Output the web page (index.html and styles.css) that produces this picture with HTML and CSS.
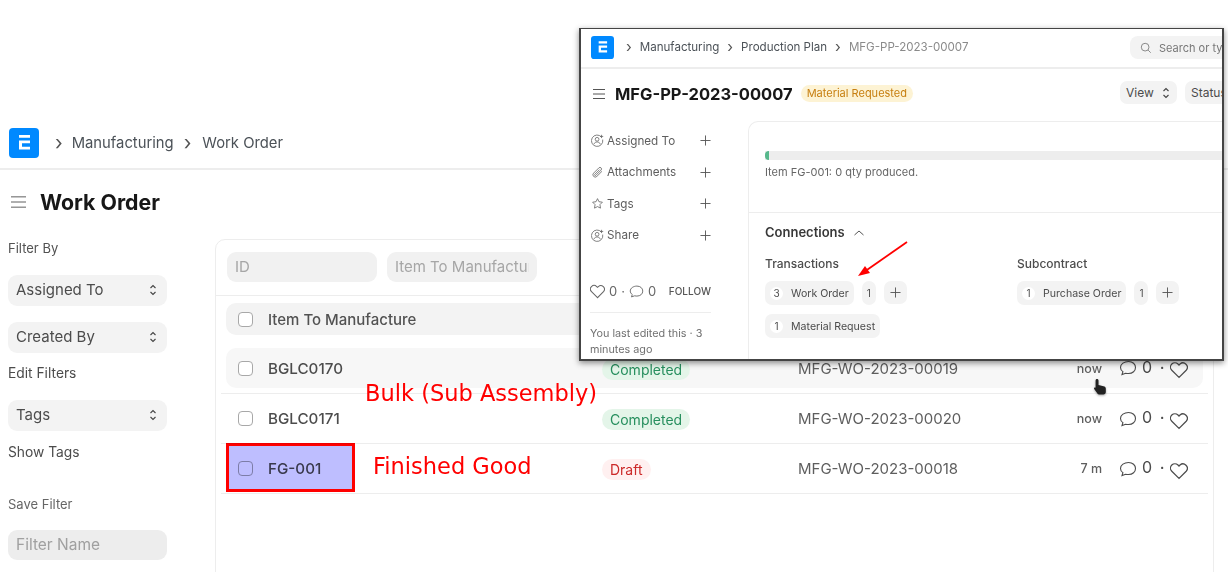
FILE: index.html
```html
<!DOCTYPE html>
<html lang="en">
<head>
<meta charset="utf-8">
<title>Work Order</title>
<link rel="stylesheet" href="styles.css">
</head>
<body>
<svg class="defs" width="0" height="0" aria-hidden="true">
  <defs>
    <symbol id="logo" viewBox="0 0 30 30">
      <rect width="30" height="30" rx="4" fill="#0089ff"/>
      <path d="M10 7h11v2.800H10zM10 12.500h11v2.800h-8v3.400h8v2.800H10z" fill="#fff"/>
    </symbol>
    <symbol id="updown" viewBox="0 0 8 14">
      <path d="M1.500 5 4 2.500 6.500 5M1.500 9 4 11.500 6.500 9" fill="none" stroke="currentColor" stroke-width="1.100"/>
    </symbol>
    <symbol id="heart" viewBox="1 1 16 16">
      <path d="M9 15.600 2.600 9.200a3.900 3.900 0 0 1 0-5.500 3.900 3.900 0 0 1 5.500 0l.9.900.9-.9a3.900 3.900 0 0 1 5.500 5.500z" fill="none" stroke="currentColor" stroke-width="1.100"/>
    </symbol>
    <symbol id="comment" viewBox="0 0 18 18">
      <path d="M9.500 2.500C5.300 2.500 1.500 5 1.500 8.400c0 1.800 1 3.200 2.400 4.200L3 15.500l3.600-1.300c.9.200 1.900.3 2.900.3 4.200 0 7-2.600 7-6S13.700 2.500 9.500 2.500z" fill="none" stroke="currentColor" stroke-width="1.100"/>
    </symbol>
    <symbol id="user" viewBox="0 0 16 16">
      <path d="M13 3.900a7 7 0 1 0 1.400 3" fill="none" stroke="currentColor"/>
      <circle cx="7.500" cy="6.500" r="2.300" fill="none" stroke="currentColor"/>
      <path d="M3.500 12.500c.8-1.800 2.200-2.700 4-2.700s3.200.9 4 2.700M13 1v4M11 3h4" fill="none" stroke="currentColor"/>
    </symbol>
    <symbol id="plus" viewBox="0 0 12 12">
      <path d="M6 .5v11M.5 6h11" fill="none" stroke="currentColor"/>
    </symbol>
  </defs>
</svg>

<div class="page">
  <header class="topbar">
    <svg class="logo"><use href="#logo"/></svg>
    <nav class="crumbs"><span class="sep">›</span><span>Manufacturing</span><span class="sep">›</span><span>Work Order</span></nav>
  </header>
  <div class="titlebar">
    <svg class="menu" viewBox="0 0 16 14"><path d="M0 1.500h16M0 7h16M0 12.500h16" stroke="#555" fill="none"/></svg>
    <h1>Work Order</h1>
  </div>
  <div class="body">
    <aside class="filters">
      <div class="side-label first">Filter By</div>
      <div class="select">Assigned To<svg class="updown"><use href="#updown"/></svg></div>
      <div class="select">Created By<svg class="updown"><use href="#updown"/></svg></div>
      <div class="side-link edit">Edit Filters</div>
      <div class="select">Tags<svg class="updown"><use href="#updown"/></svg></div>
      <div class="side-link show">Show Tags</div>
      <div class="side-label save">Save Filter</div>
      <div class="input-fill">Filter Name</div>
    </aside>
    <main class="card">
      <div class="inputs">
        <div class="input"><span class="input-text">ID</span></div>
        <div class="input"><span class="input-text">Item To Manufacture</span></div>
      </div>
      <div class="rows">
        <div class="row head"><span class="check"></span><span class="name">Item To Manufacture</span></div>
        <div class="row hover">
          <span class="check"></span><span class="name">BGLC0170</span>
          <span class="status"><span class="pill green">Completed</span></span>
          <span class="docid">MFG-WO-2023-00019</span>
          <span class="time">now</span>
          <span class="meta"><svg class="ic"><use href="#comment"/></svg><b>0</b><i>·</i><svg class="ic"><use href="#heart"/></svg></span>
        </div>
        <div class="row">
          <span class="check"></span><span class="name">BGLC0171</span>
          <span class="status"><span class="pill green">Completed</span></span>
          <span class="docid">MFG-WO-2023-00020</span>
          <span class="time">now</span>
          <span class="meta"><svg class="ic"><use href="#comment"/></svg><b>0</b><i>·</i><svg class="ic"><use href="#heart"/></svg></span>
        </div>
        <div class="row">
          <span class="check"></span><span class="name">FG-001</span>
          <span class="status"><span class="pill red">Draft</span></span>
          <span class="docid">MFG-WO-2023-00018</span>
          <span class="time">7 m</span>
          <span class="meta"><svg class="ic"><use href="#comment"/></svg><b>0</b><i>·</i><svg class="ic"><use href="#heart"/></svg></span>
        </div>
      </div>
    </main>
  </div>
</div>

<div class="mark-box"></div>
<div class="note note-bulk">Bulk (Sub Assembly)</div>
<div class="note note-good">Finished Good</div>

<section class="window">
  <header class="w-top">
    <svg class="w-logo"><use href="#logo"/></svg>
    <nav class="w-crumbs"><span class="sep">›</span><span>Manufacturing</span><span class="sep">›</span><span>Production Plan</span><span class="sep">›</span><span class="muted">MFG-PP-2023-00007</span></nav>
    <div class="w-search"><svg viewBox="0 0 14 14"><circle cx="6" cy="6" r="4.500" fill="none" stroke="#777"/><path d="m9.500 9.500 3 3" stroke="#777"/></svg><span>Search or type a command</span></div>
  </header>
  <div class="w-title">
    <svg class="w-menu" viewBox="0 0 12 12"><path d="M0 1.500h12M0 6h12M0 10.500h12" stroke="#555" fill="none"/></svg>
    <h2>MFG-PP-2023-00007</h2>
    <span class="w-badge">Material Requested</span>
    <div class="w-actions">
      <span class="w-btn view">View<svg class="updown small"><use href="#updown"/></svg></span>
      <span class="w-btn">Status</span>
    </div>
  </div>
  <div class="w-body">
    <aside class="w-side">
      <div class="w-item"><svg class="w-ic"><use href="#user"/></svg><span>Assigned To</span><svg class="w-plus"><use href="#plus"/></svg></div>
      <div class="w-item"><svg class="w-ic" viewBox="0 0 16 16"><path d="M13.500 6.500 7.200 12.800a2.800 2.800 0 0 1-4-4l6.500-6.500a1.900 1.900 0 0 1 2.700 2.700L6 11.500a.9.9 0 0 1-1.300-1.300l5.800-5.800" fill="none" stroke="currentColor"/></svg><span>Attachments</span><svg class="w-plus"><use href="#plus"/></svg></div>
      <div class="w-item"><svg class="w-ic" viewBox="0 0 16 16"><path d="m8 2 1.800 3.800 4.200.6-3 3 .7 4.300L8 11.800l-3.700 1.900.7-4.300-3-3 4.200-.6z" fill="none" stroke="currentColor"/></svg><span>Tags</span><svg class="w-plus"><use href="#plus"/></svg></div>
      <div class="w-item"><svg class="w-ic"><use href="#user"/></svg><span>Share</span><svg class="w-plus"><use href="#plus"/></svg></div>
      <div class="w-stats"><svg class="w-s-ic"><use href="#heart"/></svg><span>0</span><em>·</em><svg class="w-s-ic"><use href="#comment"/></svg><span>0</span><small>FOLLOW</small></div>
      <p class="w-edited">You last edited this · 3 minutes ago</p>
    </aside>
    <div class="w-form">
      <div class="w-progress-wrap">
        <div class="w-progress"><div class="w-progress-fill"></div></div>
        <div class="w-progress-text">Item FG-001: 0 qty produced.</div>
      </div>
      <div class="w-conn">
        <div class="w-conn-head">Connections<svg viewBox="0 0 12 8"><path d="m1.500 6 4.500-4 4.500 4" fill="none" stroke="#555"/></svg></div>
        <div class="w-cols">
          <div class="w-col">
            <div class="w-col-title">Transactions</div>
            <div class="w-line"><span class="chip"><span class="num">3</span>Work Order</span><span class="tiny">1</span><span class="add"><svg><use href="#plus"/></svg></span></div>
            <div class="w-line"><span class="chip"><span class="num">1</span>Material Request</span></div>
          </div>
          <div class="w-col">
            <div class="w-col-title">Subcontract</div>
            <div class="w-line"><span class="chip"><span class="num">1</span>Purchase Order</span><span class="tiny">1</span><span class="add"><svg><use href="#plus"/></svg></span></div>
          </div>
        </div>
      </div>
    </div>
  </div>
</section>

<svg class="arrow" viewBox="0 0 52 36"><path d="M50 1 7 31" stroke="#f00" stroke-width="1.800" fill="none"/><path d="M1 35 13 32 8 25z" fill="#f00"/></svg>
<svg class="cursor" viewBox="0 0 14 18"><path d="M4 1c.9 0 1.500.6 1.500 1.500V7l5 1.200c1.400.3 2.300 1.100 2.300 2.400v3.400c0 1.400-1 2.500-2.400 2.500H6.500c-.9 0-1.600-.3-2.100-1.100L1.200 11c-.6-1 .5-2.100 1.400-1.300V2.500C2.600 1.600 3.100 1 4 1z" fill="#222"/></svg>
</body>
</html>
```
FILE: styles.css
```css
* { box-sizing: border-box; }
html, body { margin: 0; height: 100%; }
body {
  width: 1228px;
  height: 572px;
  overflow: hidden;
  position: relative;
  background: #fff;
  font-family: Inter, "Liberation Sans", sans-serif;
  color: #383838;
}
.defs { position: absolute; }

/* main page */
.page { padding-top: 118px; }
.topbar {
  height: 52px;
  display: flex;
  align-items: center;
  padding-left: 9px;
  border-bottom: 2px solid #ededed;
}
.logo { width: 30px; height: 30px; }
.crumbs { display: flex; align-items: center; font-size: 14.800px; color: #4c5258; margin-left: 16px; }
.crumbs .sep { font-size: 20px; line-height: 20px; margin-right: 9px; color: #555; }
.crumbs span:nth-child(3) { margin-left: 10px; margin-right: 11px; }
.titlebar { display: flex; align-items: center; height: 64px; padding-left: 11px; }
.menu { width: 15px; height: 14px; }
h1 { margin: 0 0 0 14px; font-size: 21.300px; line-height: 28px; font-weight: 700; color: #171717; }
.body { display: flex; align-items: flex-start; padding-left: 8px; }
.filters { width: 159px; flex: none; font-size: 13px; color: #525252; }
.side-label.first { margin-top: 6px; line-height: 16px; }
.select {
  height: 31px;
  margin-top: 19px;
  padding: 0 10px 2px 8px;
  display: flex;
  align-items: center;
  justify-content: space-between;
  background: #f3f3f3;
  border-radius: 9px;
  font-size: 15px;
  color: #4c4c4c;
}
.select + .select { margin-top: 16px; }
.updown { width: 8px; height: 14px; color: #444; }
.updown.small { margin-left: 8px; }
.side-link { font-size: 13.800px; line-height: 16px; color: #4c4c4c; }
.edit { margin-top: 12px; }
.edit + .select { margin-top: 19px; }
.show { margin-top: 13px; }
.save { margin-top: 36px; line-height: 16px; color: #666; }
.input-fill {
  margin-top: 18px;
  height: 30px;
  padding-left: 8px;
  border-radius: 9px;
  background: #ededed;
  font-size: 15.500px;
  line-height: 30px;
  color: #a0a0a0;
}
.card {
  margin: 5px 0 0 48px;
  width: 999px;
  height: 340px;
  border: 1px solid #ededed;
  border-radius: 10px 0 0 0;
}
.inputs { display: flex; gap: 10px; height: 56px; padding: 12px 11px 0; border-bottom: 1px solid #ededed; }
.input {
  width: 150px;
  height: 30px;
  padding: 0 8px;
  background: #f1f1f1;
  border-radius: 9px;
  font-size: 15px;
  line-height: 30px;
  color: #a6a6a6;
}
.input-text { display: block; overflow: hidden; white-space: nowrap; }
.rows { padding: 7px 5px 0; }
.row {
  display: grid;
  grid-template-columns: 30px 334px 196px 1fr 60px 106px;
  align-items: center;
  height: 50px;
  padding-left: 17px;
  border-bottom: 1px solid #ededed;
  font-size: 15.200px;
  color: #4c4c4c;
}
.row.head {
  height: 32px;
  margin: 0 5px 13px;
  padding-left: 12px;
  background: #f3f3f3;
  border-radius: 10px;
  border: 0;
}
.row.head .name { color: #525252; font-size: 15px; white-space: nowrap; }
.row.hover {
  height: 46px;
  padding-bottom: 5px;
  position: relative;
  isolation: isolate;
}
.row.hover::before {
  content: "";
  position: absolute;
  inset: 0 5px 5px 5px;
  z-index: -1;
  background: #f7f7f7;
  border-radius: 10px;
}
.check { width: 15px; height: 15px; border: 1px solid #a8a8a8; border-radius: 4px; background: #fff; }
.name { font-weight: 500; }
.status { padding-top: 2px; }
.pill { display: inline-block; padding: 0 8px; height: 21px; line-height: 21px; font-size: 14px; border-radius: 11px; }
.pill.green { background: #e4f5e9; color: #278f5e; }
.pill.red { background: #fff0f0; color: #cc2929; }
.docid { color: #5e5e5e; font-size: 15px; white-space: nowrap; }
.time { text-align: right; font-size: 12.500px; font-weight: 500; color: #5e5e5e; }
.meta { display: flex; align-items: center; padding-left: 17px; color: #4c4c4c; }
.meta b { font-weight: 400; font-size: 16px; margin: -3px 0 0 5px; }
.meta i { font-style: normal; margin: -3px 6px 0 8px; font-weight: 700; font-size: 13px; }
.ic { width: 18px; height: 18px; }
.ic:last-child { margin-top: 4px; }

/* annotations */
.mark-box {
  position: absolute;
  left: 226px;
  top: 443px;
  width: 129px;
  height: 49px;
  border: 3px solid #f00;
  background: rgba(100, 100, 255, 0.42);
  mix-blend-mode: multiply;
}
.note { position: absolute; color: #f00; font-family: "DejaVu Sans", sans-serif; white-space: nowrap; font-size: 22.500px; line-height: 28px; }
.note-bulk { left: 365px; top: 379px; }
.note-good { left: 373px; top: 452px; }
.arrow { position: absolute; left: 857px; top: 241px; width: 52px; height: 36px; z-index: 3; }
.cursor {
  position: absolute;
  left: 1093px;
  top: 378px;
  width: 14px;
  height: 18px;
  filter: drop-shadow(0 1px 1px rgba(0, 0, 0, 0.35));
}

/* overlaid window */
.window {
  position: absolute;
  left: 579px;
  top: 28px;
  width: 645px;
  height: 333px;
  overflow: hidden;
  background: #fff;
  border: 1px solid #444;
  border-width: 1px 2px 2px 2px;
  box-shadow: 0 2px 6px rgba(0, 0, 0, 0.45);
  z-index: 2;
}
.w-top {
  position: relative;
  height: 40px;
  display: flex;
  align-items: center;
  padding: 0 0 2px 10px;
  border-bottom: 2px solid #ededed;
  white-space: nowrap;
}
.w-logo { width: 23px; height: 23px; flex: none; }
.w-crumbs { display: flex; align-items: center; font-size: 11.550px; color: #4c5258; margin-left: 12px; }
.w-crumbs .sep { font-size: 15px; line-height: 14px; margin: 0 8px; color: #555; }
.w-crumbs .sep:first-child { margin-left: 0; }
.muted { color: #8a8a8a; }
.w-search {
  position: absolute;
  left: 549px;
  top: 7px;
  width: 200px;
  height: 23px;
  display: flex;
  align-items: center;
  gap: 7px;
  padding-left: 10px;
  background: #f3f3f3;
  border-radius: 8px;
  font-size: 11px;
  color: #777;
}
.w-search svg { width: 12px; height: 12px; }
.w-title { position: relative; height: 51px; display: flex; align-items: center; padding: 0 0 2px 12px; white-space: nowrap; }
.w-menu { width: 12px; height: 12px; }
h2 { margin: 0 0 0 10px; font-size: 16.500px; line-height: 24px; font-weight: 700; color: #171717; }
.w-badge {
  margin-left: 8px;
  height: 17px;
  padding: 0 6px;
  background: #fdf3d4;
  color: #c77f10;
  border-radius: 9px;
  font-size: 11px;
  line-height: 17px;
}
.w-actions { position: absolute; left: 539px; top: 12px; display: flex; gap: 8px; }
.w-btn {
  height: 23px;
  padding: 0 6px;
  display: flex;
  align-items: center;
  background: #f3f3f3;
  border-radius: 7px;
  font-size: 12px;
  color: #4c4c4c;
}
.w-btn.view { width: 57px; }
.w-body { display: flex; height: 241px; }
.w-side { width: 167px; flex: none; padding: 5px 0 0 9px; font-size: 11.700px; color: #5e5e5e; }
.w-item { height: 31.500px; padding-left: 1px; display: flex; align-items: center; }
.w-ic { width: 13px; height: 13px; flex: none; color: #666; }
.w-item span { margin-left: 3px; flex: 1; }
.w-plus { width: 11px; height: 11px; margin-right: 37px; color: #555; }
.w-stats { display: flex; align-items: center; margin-top: 31px; height: 18px; width: 121px; font-size: 13px; color: #666; }
.w-s-ic { width: 15px; height: 15px; }
.w-stats span { margin-left: 4px; }
.w-stats em { font-style: normal; margin: 0 4px; }
.w-stats small { margin-left: auto; font-size: 10px; font-weight: 500; color: #555; }
.w-edited { width: 121px; margin: 12px 0 0; padding-top: 13px; border-top: 1px solid #ededed; font-size: 10.800px; line-height: 16px; color: #707070; }
.w-form { flex: 1; margin-top: 1px; border-left: 1px solid #ededed; border-top: 1px solid #ededed; border-top-left-radius: 10px; }
.w-progress-wrap { height: 91px; padding: 29px 0 0 16px; border-bottom: 1px solid #ededed; }
.w-progress { height: 9px; background: #ededed; }
.w-progress-fill { width: 4px; height: 9px; background: #57b88c; border-radius: 4px 0 0 4px; }
.w-progress-text { margin-top: 5px; font-size: 11px; line-height: 14px; color: #666; }
.w-conn { padding: 10px 0 0 16px; }
.w-conn-head { display: flex; align-items: center; gap: 8px; font-size: 13px; line-height: 18px; font-weight: 600; color: #383838; }
.w-conn-head svg { width: 12px; height: 8px; margin-top: 2px; }
.w-cols { display: flex; margin-top: 15px; }
.w-col { width: 252px; }
.w-col-title { font-size: 12px; line-height: 16px; color: #4c4c4c; font-weight: 500; }
.w-line { display: flex; gap: 8px; margin-top: 9px; height: 24px; }
.chip {
  display: flex;
  align-items: center;
  height: 24px;
  padding: 0 5px;
  background: #f3f3f3;
  border-radius: 7px;
  font-size: 10.600px;
  color: #4c4c4c;
  white-space: nowrap;
}
.num { width: 13px; height: 13px; margin-right: 8px; border-radius: 50%; background: #fff; text-align: center; font-size: 10px; line-height: 13px; }
.tiny { width: 14px; height: 24px; background: #f3f3f3; border-radius: 7px; font-size: 10px; line-height: 24px; text-align: center; color: #4c4c4c; }
.add { width: 23px; height: 23px; display: flex; align-items: center; justify-content: center; background: #f3f3f3; border-radius: 7px; color: #555; }
.add svg { width: 11px; height: 11px; }
```
